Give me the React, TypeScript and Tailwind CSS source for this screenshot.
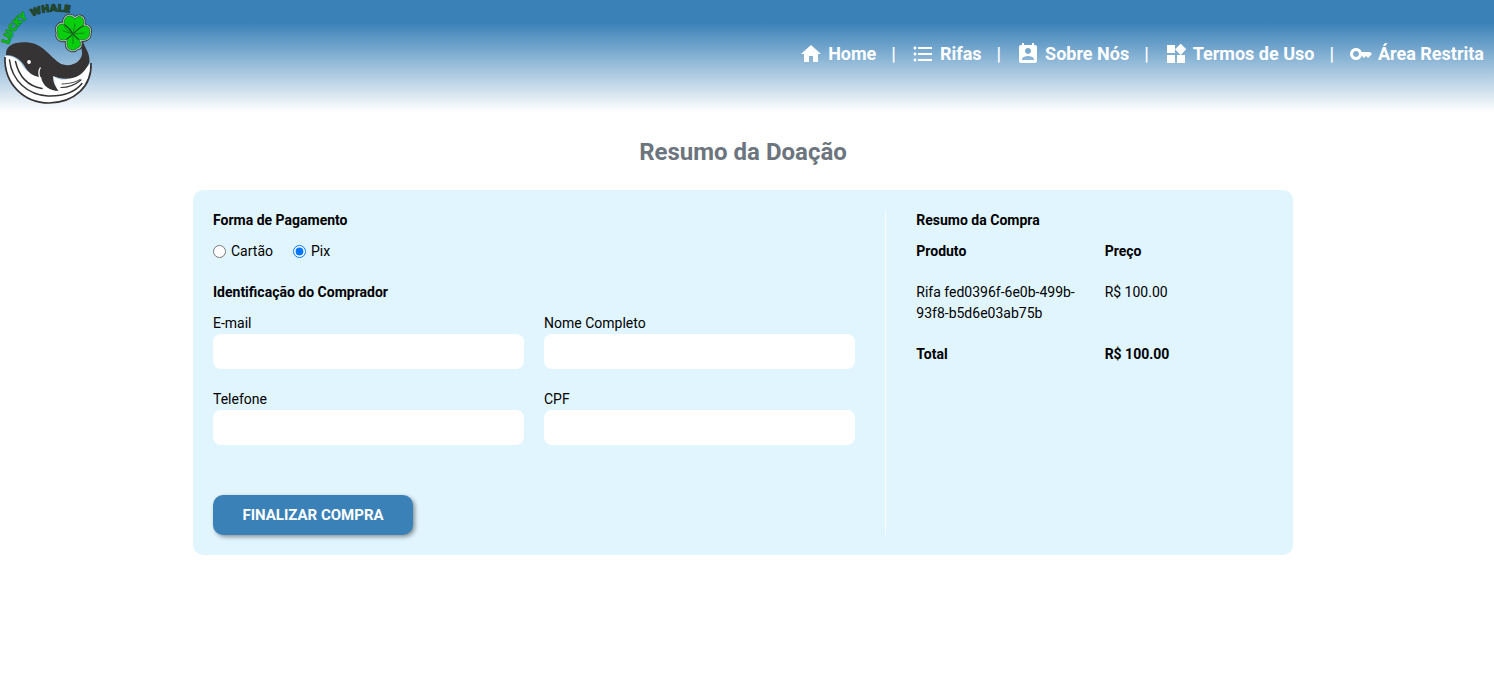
import { Fragment, useState } from "react";
import { MdFormatListBulleted, MdHome, MdKey, MdPermContactCalendar, MdWidgets } from "react-icons/md";

const links = [
  { label: "Home", Icon: MdHome },
  { label: "Rifas", Icon: MdFormatListBulleted },
  { label: "Sobre Nós", Icon: MdPermContactCalendar },
  { label: "Termos de Uso", Icon: MdWidgets },
  { label: "Área Restrita", Icon: MdKey },
];

const clover =
  "M73 34 C66 31 62 25 65 19 C67 15 72 15 75 19 C78 15 83 16 83.5 21 C84 23 83 25 83 26 C88 25 91 29 89.5 33 C90 39 84 41 78 39 C82 42 81 48 77 48 C74 52 67 50 67 44 L67 39 C61 42 56 38 58 33 C55 27 60 22 65 25Z";

function Logo() {
  return (
    <svg viewBox="0 0 100 110" className="block h-[110px] w-[100px]" aria-label="Lucky Whale">
      <defs>
        <path id="lucky-arc" d="M8.5 44.5 C12 33 19 23 31 15.5" />
        <path id="whale-arc" d="M32 16.5 C44 11 57 9.5 74 13.5" />
      </defs>
      <g fontFamily="'DejaVu Sans', sans-serif" fontWeight="900" strokeLinejoin="round" style={{ paintOrder: "stroke" }}>
        <text fontSize="10" fill="#08bd12" stroke="#138a2c" strokeWidth="1.5">
          <textPath href="#lucky-arc" textLength="34" lengthAdjust="spacingAndGlyphs">LUCKY</textPath>
        </text>
        <text fontSize="9.5" fill="#1d4a2c" stroke="#2a4038" strokeWidth="1.3">
          <textPath href="#whale-arc" textLength="39" lengthAdjust="spacingAndGlyphs">WHALE</textPath>
        </text>
      </g>
      {/* belly */}
      <path d="M5 56 C9 55 16 57 21 63 C27 73 33 76 40 77 L53 78 L58 90 L53 76 C60 82 73 83 91 63 C91 88 73 103 48 103 C24 102 4 84 5 56Z" fill="#fff" />
      <path d="M5 57 C4 84 24 103 49 103 C75 102.500 92 86 91 63" fill="none" stroke="#353334" strokeWidth="1.7" />
      <g fill="none" stroke="#353334" strokeWidth="1.5" strokeLinecap="round">
        <path d="M9.500 60 C12 81 28 95 48 96 C64 96.500 75 92 82 83.500" />
        <path d="M15.500 61.500 C19 77 28 86 42 88.500" />
        <path d="M61 87.500 C69 87.500 75 85 81 80" strokeWidth="1.2" />
        <path d="M62 84 C70 83.500 75 82.500 80 79.500" strokeWidth="0.9" />
      </g>
      {/* back, tail and fin */}
      <path d="M6 55 C5 44 17 41 29 42.500 C43 44 50 57 61 64 C72 68 83 61 82 52 C82 48 80 46 77 45 L83 41 C84 47 90 52 89.500 62 C86 71 79 78 69 78.500 C62 79 58 78 53 76 C53 83 56 87 58.500 91 C50 90.500 43 87 41 77 C34 77 28 73 24 65 C19 58 13 55 6 55Z" fill="#353334" />
      <circle cx="29" cy="62" r="1.9" fill="#fff" />
      <path d="M40.500 67.500 Q37.500 72 40 78" fill="none" stroke="#fff" strokeWidth="1.3" />
      {/* clover */}
      <path d={clover} fill="#353f3c" stroke="#353f3c" strokeWidth="4.2" strokeLinejoin="round" />
      <path d={clover} fill="#b9cdc5" stroke="#b9cdc5" strokeWidth="2.4" strokeLinejoin="round" />
      <path d={clover} fill="#08cf0c" stroke="#16791c" strokeWidth="0.8" strokeLinejoin="round" />
      <path d="M65 25 C68 27 71 30 73 34 C76 31 79 28 83 26 M67 39 L73 34 L78 39" fill="none" stroke="#23502a" strokeWidth="1.200" strokeLinecap="round" />
      <path d="M73 34 L75 24 M73 34 L63 31 M73 34 L84 33 M73 34 L73 44" fill="none" stroke="#14751a" strokeWidth="0.8" strokeLinecap="round" />
    </svg>
  );
}

function Field({ label, type = "text" }: { label: string; type?: string }) {
  return (
    <label className="flex flex-col">
      {label}
      <input type={type} className="h-[35px] w-full rounded-lg bg-white px-2.5 outline-none" />
    </label>
  );
}

export default function App() {
  const [method, setMethod] = useState("pix");

  return (
    <div className="min-h-[690px] bg-white font-['Roboto',sans-serif] text-sm leading-[21px] text-black">
      <header className="flex h-[112px] items-start justify-between bg-[linear-gradient(180deg,#3a81b8_20%,#ffffff_100%)] pr-2.5">
        <Logo />
        <nav className="flex h-[108px] items-center text-lg font-bold text-white">
          {links.map(({ label, Icon }, i) => (
            <Fragment key={label}>
              {i > 0 && <span className="mx-[15px]">|</span>}
              <a href="#" className="flex items-center gap-[5px]">
                <Icon size={24} />
                {label}
              </a>
            </Fragment>
          ))}
        </nav>
      </header>

      <main className="flex w-[1486px] flex-col items-center">
        <h1 className="mt-[22px] text-2xl leading-9 font-bold text-[#6c757d]">Resumo da Doação</h1>
        <div className="mt-5 flex h-[365px] w-[1100px] rounded-[10px] bg-[#e1f5fe] p-5">
          <form className="flex w-[673px] shrink-0 flex-col items-start border-r border-white/70 pr-[30px]" onSubmit={(e) => e.preventDefault()}>
            <h2 className="font-bold">Forma de Pagamento</h2>
            <div className="mt-2.5 flex gap-5">
              <label className="flex items-center gap-[5px]">
                <input type="radio" name="method" className="m-0 size-[13px]" checked={method === "card"} onChange={() => setMethod("card")} />
                Cartão
              </label>
              <label className="flex items-center gap-[5px]">
                <input type="radio" name="method" className="m-0 size-[13px]" checked={method === "pix"} onChange={() => setMethod("pix")} />
                Pix
              </label>
            </div>
            <h2 className="mt-5 font-bold">Identificação do Comprador</h2>
            <div className="mt-2.5 grid w-full grid-cols-2 gap-5">
              <Field label="E-mail" type="email" />
              <Field label="Nome Completo" />
              <Field label="Telefone" type="tel" />
              <Field label="CPF" />
            </div>
            <button className="mt-auto h-10 w-[200px] rounded-[10px] bg-[#3a81b8] text-[15px] font-bold text-white shadow-[2px_2px_4px_rgba(0,0,0,0.4)]">
              FINALIZAR COMPRA
            </button>
          </form>
          <section className="flex-1 pl-[30.3px]">
            <h2 className="font-bold">Resumo da Compra</h2>
            <div className="mt-2.5 grid grid-cols-2 gap-5">
              <strong className="font-bold">Produto</strong>
              <strong className="font-bold">Preço</strong>
              <span>Rifa fed0396f-6e0b-499b-93f8-b5d6e03ab75b</span>
              <span>R$ 100.00</span>
              <strong className="font-bold">Total</strong>
              <strong className="font-bold">R$ 100.00</strong>
            </div>
          </section>
        </div>
      </main>
    </div>
  );
}
